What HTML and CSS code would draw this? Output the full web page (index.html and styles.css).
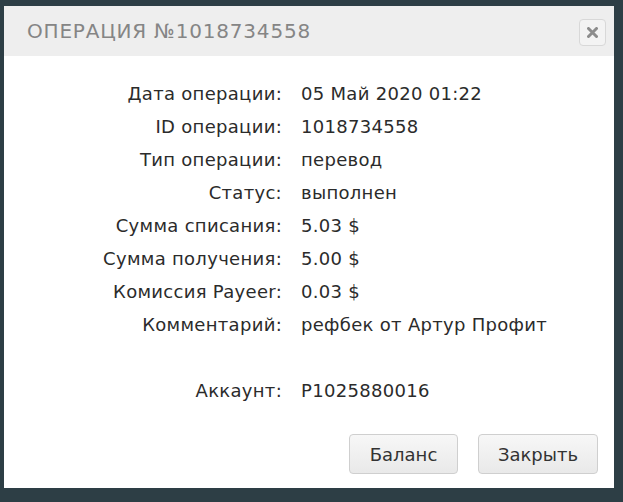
FILE: index.html
```html
<!DOCTYPE html>
<html lang="ru">
<head>
    <meta charset="UTF-8" />
    <title>Операция</title>
    <link rel="stylesheet" href="styles.css">
</head>
<body>

    <div class="modal">
        <!-- Шапка -->
        <div class="modal-header">
            <span class="modal-title">ОПЕРАЦИЯ №1018734558</span>
            <button class="close-btn" aria-label="Закрыть">
                <svg width="11" height="11" viewBox="0 0 11 11">
                  <path d="M1.5 1.5l8 8M9.5 1.5l-8 8" stroke="#8c8c8c" stroke-width="3" stroke-linecap="round"/>
                </svg>
            </button>
        </div>

        <!-- Детали операции -->
        <div class="details">
            <div class="label">Дата операции:</div><div class="value">05 Май 2020 01:22</div>
            <div class="label">ID операции:</div><div class="value">1018734558</div>
            <div class="label">Тип операции:</div><div class="value">перевод</div>
            <div class="label">Статус:</div><div class="value">выполнен</div>
            <div class="label">Сумма списания:</div><div class="value">5.03 $</div>
            <div class="label">Сумма получения:</div><div class="value">5.00 $</div>
            <div class="label">Комиссия Payeer:</div><div class="value">0.03 $</div>
            <div class="label">Комментарий:</div><div class="value">рефбек от Артур Профит</div>
            <div class="label"></div><div class="value"></div>
            <div class="label">Аккаунт:</div><div class="value">P1025880016</div>
        </div>

        <!-- Кнопки -->
        <div class="modal-footer">
            <button class="btn btn-balance">Баланс</button>
            <button class="btn btn-close">Закрыть</button>
        </div>
    </div>

</body>
</html>
```

FILE: styles.css
```css
body {
  margin: 0;
  background-color: #2d3e45;
  font-family: 'DejaVu Sans', sans-serif;
  color: #333;
}

.modal {
  margin: 6px 0 0 4px;
  width: 610px;
  height: 482px;
  background: #fff;
  display: flex;
  flex-direction: column;
}

.modal-header {
  height: 50px;
  background: #eeeeee;
  display: flex;
  align-items: center;
  justify-content: space-between;
  padding: 0 8px 0 23px;
}
.modal-title {
  font-family: 'DejaVu Sans', sans-serif;
  font-size: 20px;
  letter-spacing: 0.8px;
  color: #858585;
}
.close-btn {
  width: 27px;
  height: 27px;
  margin-top: 2px;
  padding: 0;
  border: 1px solid #d8d8d8;
  border-radius: 4px;
  background: #f3f3f3;
  display: flex;
  align-items: center;
  justify-content: center;
  cursor: pointer;
}

/* Таблица деталей */
.details {
  display: grid;
  grid-template-columns: 278px auto;
  column-gap: 19px;
  grid-auto-rows: 33px;
  align-items: center;
  padding-top: 21px;
  font-size: 18px;
  letter-spacing: 0.3px;
  color: #2b2b2b;
}
.label {
  text-align: right;
}

.modal-footer {
  display: flex;
  justify-content: flex-end;
  gap: 20px;
  padding: 0 16px;
  margin-top: 27px;
}
.btn {
  height: 40px;
  padding: 0;
  font-family: 'DejaVu Sans', sans-serif;
  font-size: 18px;
  color: #333;
  background: linear-gradient(#f7f7f7, #e9e9e9);
  border: 1px solid #cfcfcf;
  border-radius: 4px;
  cursor: pointer;
}
.btn-balance {
  width: 109px;
}
.btn-close {
  width: 120px;
}
```
